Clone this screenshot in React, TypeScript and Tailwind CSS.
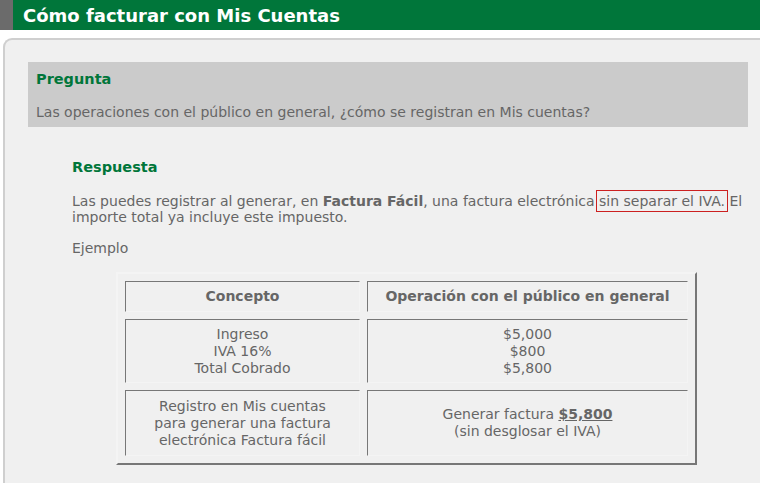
const cell = "border-t border-l border-[#777777] border-b border-r border-b-[#f4f4f4] border-r-[#f4f4f4] text-center align-middle";

const App = () => {
    return <div className="w-[760px] h-[483px] bg-white overflow-hidden text-[#666666] font-['DejaVu_Sans','Verdana',sans-serif] text-[14px]">
        <div className="h-[30px] bg-[#00763a] flex items-center">
            <div className="w-[13px] h-full bg-[#6b6b6b]" />
            <h1 className="pl-[10px] text-white font-bold text-[18px]">Cómo facturar con Mis Cuentas</h1>
        </div>

        <div className="mt-[8px] ml-[3px] h-[450px] border-t-2 border-l-2 border-[#cfcfcf] rounded-tl-[9px] bg-[#f0f0f0] pt-[22px] pl-[23px]">
            <div className="w-[720px] h-[65px] bg-[#cbcbcb] px-[8px] pt-[8px]">
                <h2 className="text-[#00763a] font-bold text-[14.5px] leading-[18px]">Pregunta</h2>
                <p className="mt-[16px] leading-[17px]">Las operaciones con el público en general, ¿cómo se registran en Mis cuentas?</p>
            </div>

            <div className="pl-[44px] pr-[3px] pt-[31px]">
                <h2 className="text-[#00763a] font-bold text-[14.5px] leading-[18px]">Respuesta</h2>
                <p className="mt-[17px] leading-[16px]">
                    Las puedes registrar al generar, en <b>Factura Fácil</b>, una factura electrónica <span className="outline outline-1 outline-[#cc2020] outline-offset-[2px]">sin separar el IVA.</span> El importe total ya incluye este impuesto.
                </p>
                <p className="mt-[15px] leading-[17px]">Ejemplo</p>

                <table className="mt-[15px] ml-[44px] w-[581px] border-separate border-spacing-[7px] border-2 border-t-[#f4f4f4] border-l-[#f4f4f4] border-r-[#777777] border-b-[#777777] leading-[17px]">
                    <tbody>
                        <tr>
                            <th className={cell + " w-[235px] h-[31px] font-bold"}>Concepto</th>
                            <th className={cell + " h-[31px] font-bold"}>Operación con el público en general</th>
                        </tr>
                        <tr>
                            <td className={cell + " h-[64px]"}>Ingreso<br />IVA 16%<br />Total Cobrado</td>
                            <td className={cell + " h-[64px]"}>$5,000<br />$800<br />$5,800</td>
                        </tr>
                        <tr>
                            <td className={cell + " h-[66px]"}>Registro en Mis cuentas<br />para generar una factura<br />electrónica Factura fácil</td>
                            <td className={cell + " h-[66px]"}>Generar factura <b className="underline">$5,800</b><br />(sin desglosar el IVA)</td>
                        </tr>
                    </tbody>
                </table>
            </div>
        </div>
    </div>
}

export default App
